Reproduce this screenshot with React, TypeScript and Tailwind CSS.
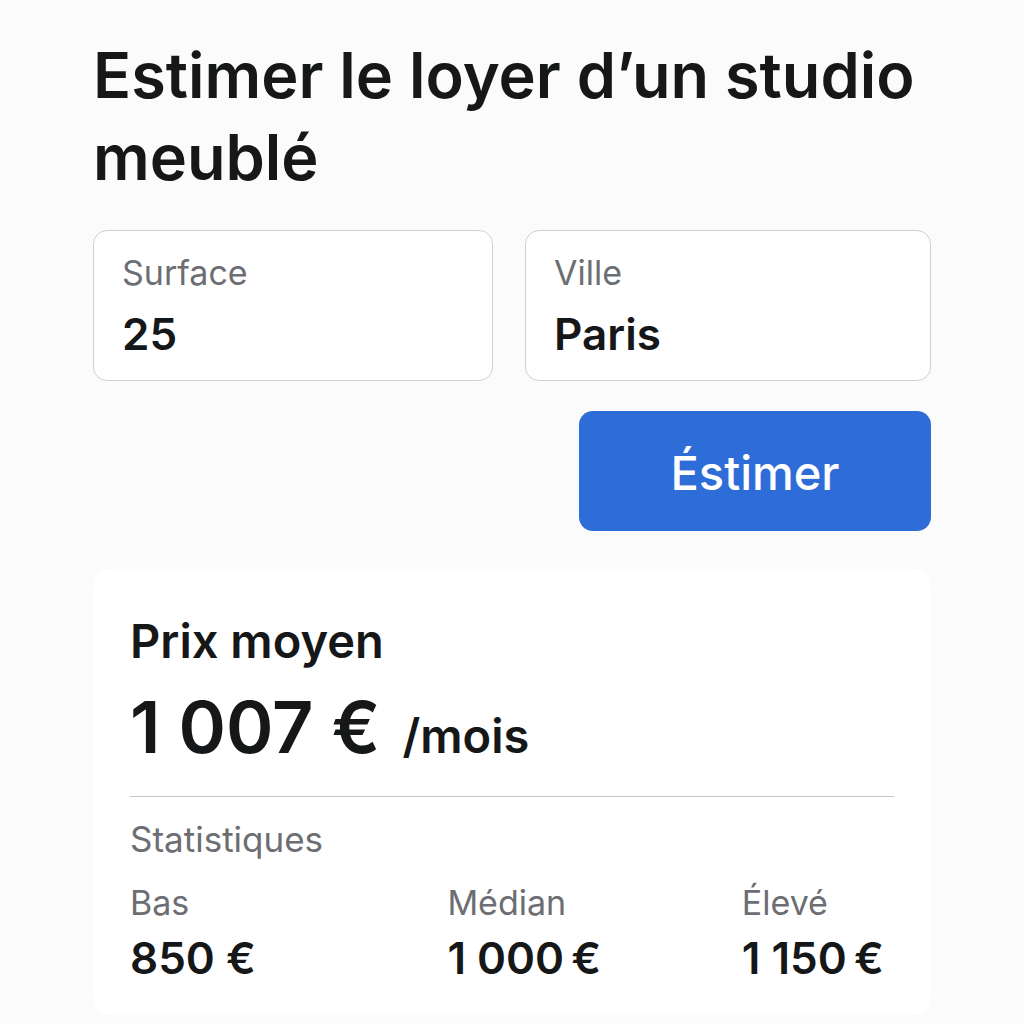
// narrow spaces: thousands separator, and the gap before the euro sign
const SP = '\u2005';
const THIN = '\u2009';

const stats = [
  { label: 'Bas', value: '850 €' },
  { label: 'Médian', value: `1${SP}000${THIN}€` },
  { label: 'Élevé', value: `1${SP}150${THIN}€` },
];

interface FieldProps {
  id: string;
  label: string;
  defaultValue: string;
}

function Field({ id, label, defaultValue }: FieldProps) {
  return (
    <div className="rounded-[14px] border border-[#cfd0d1] bg-white px-7 pt-5 pb-2">
      <label htmlFor={id} className="block text-[34px] leading-[44px] text-[#6c6e73]">
        {label}
      </label>
      <input
        id={id}
        name={id}
        type="text"
        defaultValue={defaultValue}
        className="block h-[77px] w-full bg-transparent text-[44px] font-semibold outline-none"
      />
    </div>
  );
}

export default function App() {
  return (
    <main className="min-h-screen bg-[#fbfbfb] px-[93px] pt-[34px] pb-2 font-['Inter',sans-serif] text-[#151718]">
      <h1 className="text-[63px] leading-[82px] font-semibold">
        Estimer le loyer d’un studio meublé
      </h1>

      <form className="mt-8" onSubmit={(e) => e.preventDefault()}>
        <div className="grid grid-cols-[400fr_406fr] gap-8">
          <Field id="surface" label="Surface" defaultValue="25" />
          <Field id="ville" label="Ville" defaultValue="Paris" />
        </div>
        <div className="mt-[30px] flex justify-end">
          <button
            type="submit"
            className="h-[120px] w-[42%] rounded-[14px] bg-[#2e6cd8] pt-1 text-[47px] font-medium text-white"
          >
            Éstimer
          </button>
        </div>
      </form>

      <section className="mt-[38px] rounded-[18px] bg-white px-[37px] pt-10 pb-[26px]">
        <h2 className="text-[47px] leading-[64px] font-semibold">Prix moyen</h2>
        <p className="flex items-baseline gap-[22px] leading-[108px]">
          <span className="text-[72px] font-semibold">{`1${SP}007${SP}€`}</span>
          <span className="text-[47px] font-semibold">/mois</span>
        </p>
        <hr className="mt-[6px] border-[#c4c5c7]" />
        <h3 className="mt-[18px] text-[35px] leading-[48px] text-[#6c6e73]">Statistiques</h3>
        <dl className="mt-4 grid grid-cols-[317fr_294fr_152fr]">
          {stats.map((stat) => (
            <div key={stat.label} className="whitespace-nowrap">
              <dt className="text-[34px] leading-[48px] text-[#6c6e73]">{stat.label}</dt>
              <dd className="text-[44px] leading-[62px] font-semibold">{stat.value}</dd>
            </div>
          ))}
        </dl>
      </section>
    </main>
  );
}
